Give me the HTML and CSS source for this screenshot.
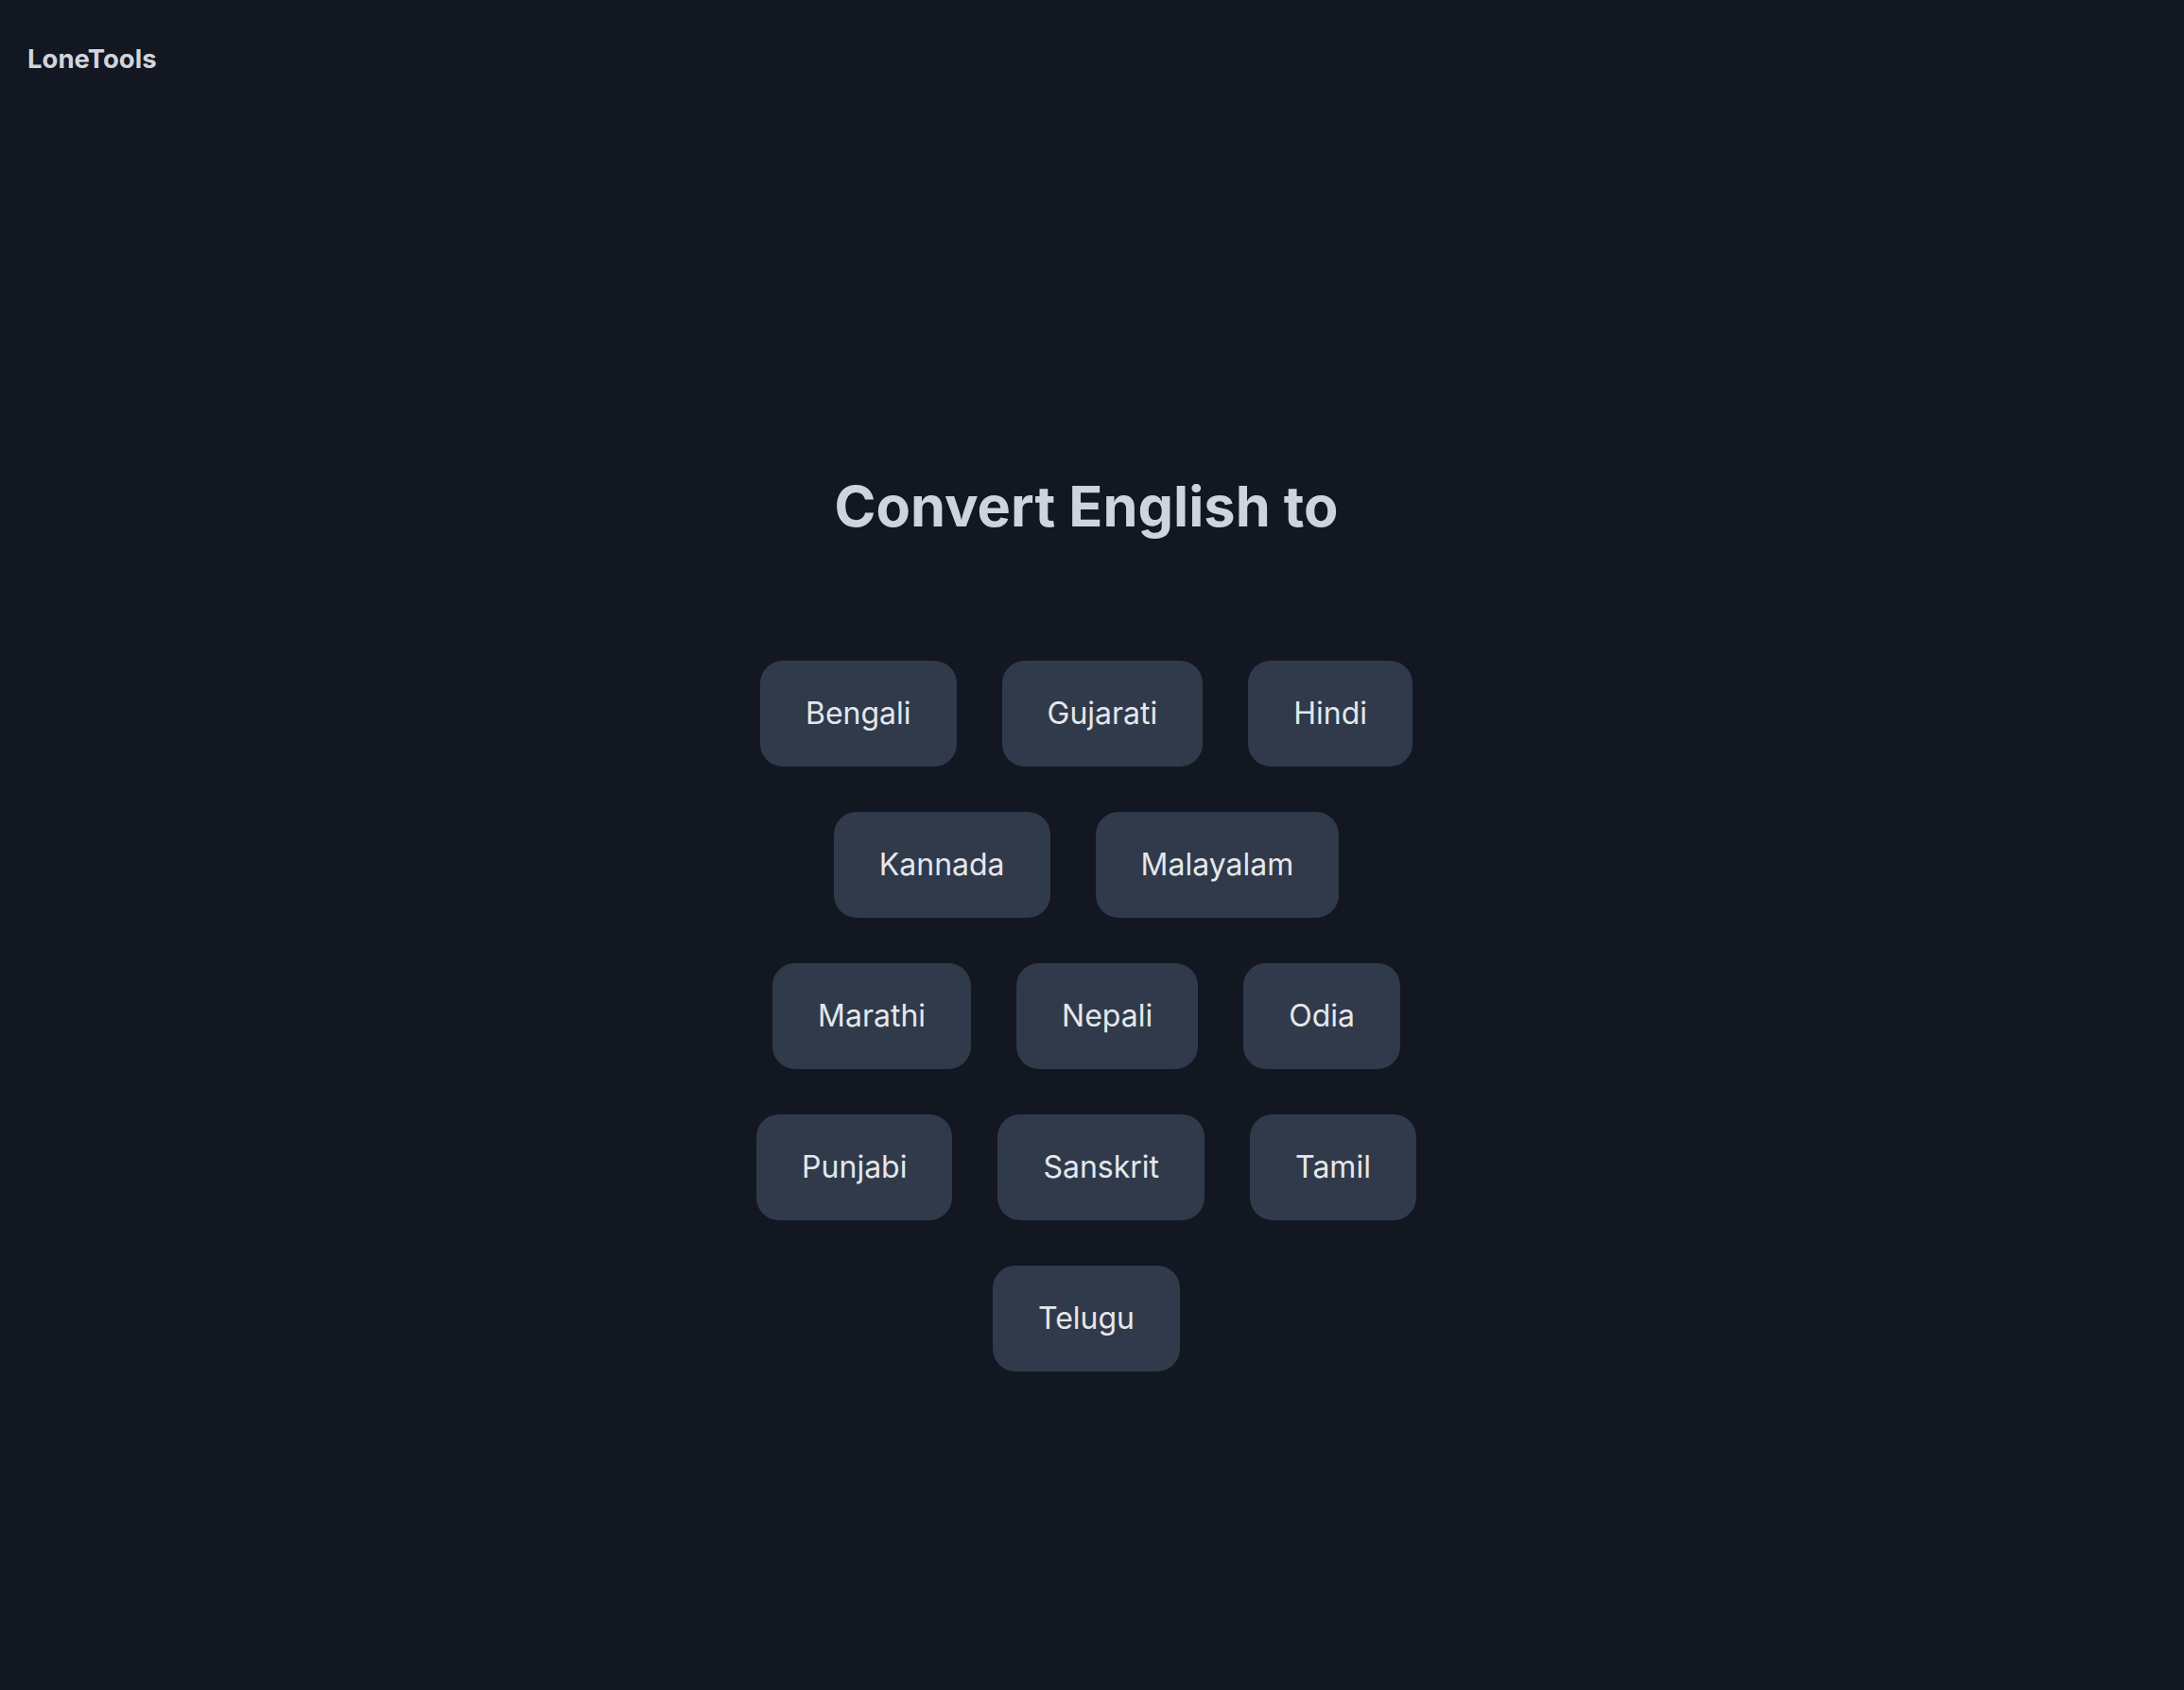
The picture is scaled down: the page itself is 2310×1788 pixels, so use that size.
FILE: index.html
```html
<!DOCTYPE html>
<html lang="en">
<head>
<meta charset="utf-8">
<title>LoneTools</title>
<link rel="stylesheet" href="styles.css">
</head>
<body>
<header class="topbar">
  <a class="brand" href="#">LoneTools</a>
</header>
<main class="main">
  <h1 class="title">Convert English to</h1>
  <nav class="langs">
    <a class="lang" href="#">Bengali</a>
    <a class="lang" href="#">Gujarati</a>
    <a class="lang" href="#">Hindi</a>
    <a class="lang" href="#">Kannada</a>
    <a class="lang" href="#">Malayalam</a>
    <a class="lang" href="#">Marathi</a>
    <a class="lang" href="#">Nepali</a>
    <a class="lang" href="#">Odia</a>
    <a class="lang" href="#">Punjabi</a>
    <a class="lang" href="#">Sanskrit</a>
    <a class="lang" href="#">Tamil</a>
    <a class="lang" href="#">Telugu</a>
  </nav>
</main>
</body>
</html>
```
FILE: styles.css
```css
html, body {
  margin: 0;
  padding: 0;
  background: #121722;
  min-height: 100%;
}
body {
  font-family: Inter, "Noto Sans", "Liberation Sans", sans-serif;
  color: #e5e7eb;
  min-height: 1788px;
}
.topbar {
  padding: 41px 29px 0;
}
.brand {
  font-size: 27.5px;
  line-height: 42px;
  font-weight: 700;
  color: #d1d5db;
  text-decoration: none;
}
.main {
  display: flex;
  flex-direction: column;
  align-items: center;
  padding-top: 422px;
  padding-right: 12px;
}
.title {
  margin: 0;
  font-size: 59.5px;
  line-height: 60px;
  font-weight: 700;
  color: #cfd4dc;
}
.langs {
  margin-top: 134px;
  max-width: 768px;
  display: flex;
  flex-wrap: wrap;
  justify-content: center;
  gap: 48px;
}
.lang {
  display: block;
  padding: 36px 48px;
  font-size: 32px;
  line-height: 40px;
  font-weight: 400;
  color: #e5e7eb;
  background: #303a4a;
  border-radius: 24px;
  text-decoration: none;
}
```
